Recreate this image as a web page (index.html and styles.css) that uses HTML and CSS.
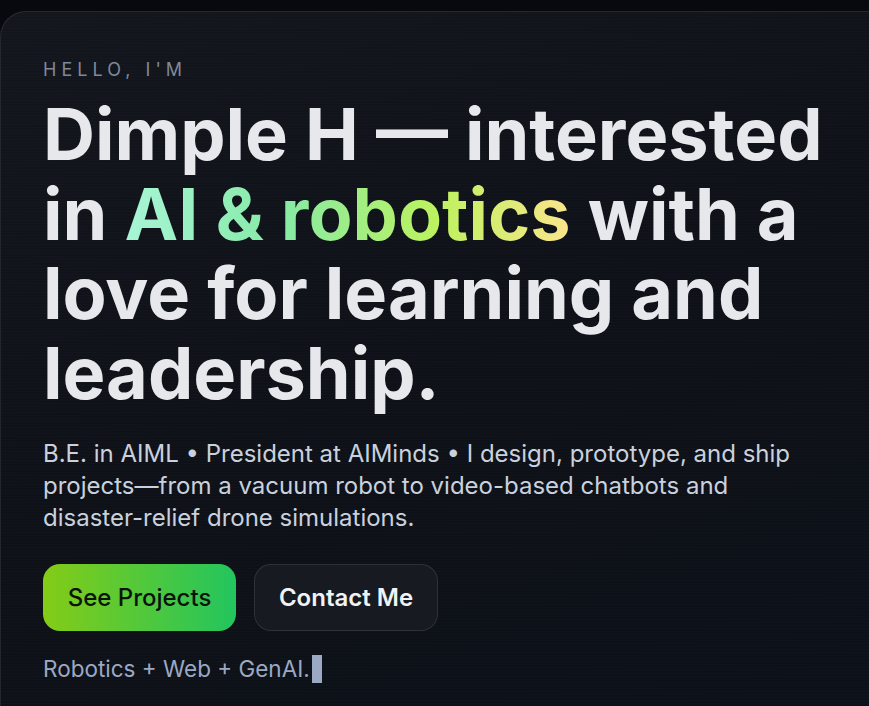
FILE: index.html
```html
<!DOCTYPE html>
<html lang="en">
<head>
<meta charset="utf-8">
<title>Dimple H</title>
<link rel="stylesheet" href="styles.css">
</head>
<body>
<main class="page">
  <section class="hero-card">
    <p class="eyebrow">HELLO, I'M</p>
    <h1 class="headline">Dimple H — interested in <span class="grad">AI &amp; robotics</span> with a love for learning and leadership.</h1>
    <p class="lead">B.E. in AIML • President at AIMinds • I design, prototype, and ship projects—from a vacuum robot to video-based chatbots and disaster-relief drone simulations.</p>
    <div class="actions">
      <a class="btn btn-primary" href="#projects">See Projects</a>
      <a class="btn btn-ghost" href="#contact">Contact Me</a>
    </div>
    <p class="typed">Robotics + Web + GenAI.<span class="caret"></span></p>
  </section>
</main>
</body>
</html>
```
FILE: styles.css
```css
html, body {
  margin: 0;
  padding: 0;
  background: #07090e;
  height: 100%;
  overflow: hidden;
}
body {
  font-family: Inter, "Noto Sans", sans-serif;
  color: #e5e7eb;
}
.page {
  padding-top: 11px;
}
.hero-card {
  width: calc(100% + 60px);
  min-height: 760px;
  box-sizing: border-box;
  border: 1px solid rgba(255, 255, 255, 0.09);
  border-radius: 26px;
  background-color: #0d1017;
  background-image:
    repeating-linear-gradient(0deg, rgba(255,255,255,0.012) 0 1px, transparent 1px 3px),
    linear-gradient(160deg, #13161c 0%, #0e1117 45%, #0c1019 100%);
  padding: 48px 0 0 42px;
}
.eyebrow {
  margin: 0;
  font-size: 18px;
  line-height: 20px;
  letter-spacing: 0.28em;
  color: #7f889a;
  font-weight: 400;
}
.headline {
  margin: 14px 0 0;
  max-width: 830px;
  font-size: 72px;
  line-height: 79.5px;
  font-weight: 700;
  letter-spacing: 0;
  color: #e7e8ec;
}
.grad {
  background: linear-gradient(90deg, #a8f5d6 0%, #86eaa6 35%, #bdf25f 70%, #fbe58c 100%);
  -webkit-background-clip: text;
  background-clip: text;
  color: transparent;
}
.lead {
  margin: 26px 0 0;
  max-width: 765px;
  font-size: 24px;
  line-height: 32px;
  color: #c9d1de;
}
.actions {
  display: flex;
  gap: 18px;
  margin-top: 30px;
}
.btn {
  display: inline-flex;
  align-items: center;
  justify-content: center;
  height: 67px;
  box-sizing: border-box;
  padding: 0 20px;
  border-radius: 17px;
  font-size: 24px;
  text-decoration: none;
}
.btn-primary {
  width: 193px;
  background: linear-gradient(90deg, #84cc16 0%, #22c55e 100%);
  color: #0b140b;
  font-weight: 500;
}
.btn-ghost {
  width: 184px;
  background: #171a21;
  border: 1px solid rgba(255, 255, 255, 0.1);
  color: #f1f2f5;
  font-weight: 600;
}
.typed {
  margin: 24px 0 0;
  display: flex;
  align-items: center;
  font-size: 22.5px;
  line-height: 28px;
  color: #9ba9c4;
}
.caret {
  display: inline-block;
  width: 10px;
  height: 28px;
  margin-left: 2px;
  background: #9ba9c4;
}
```
